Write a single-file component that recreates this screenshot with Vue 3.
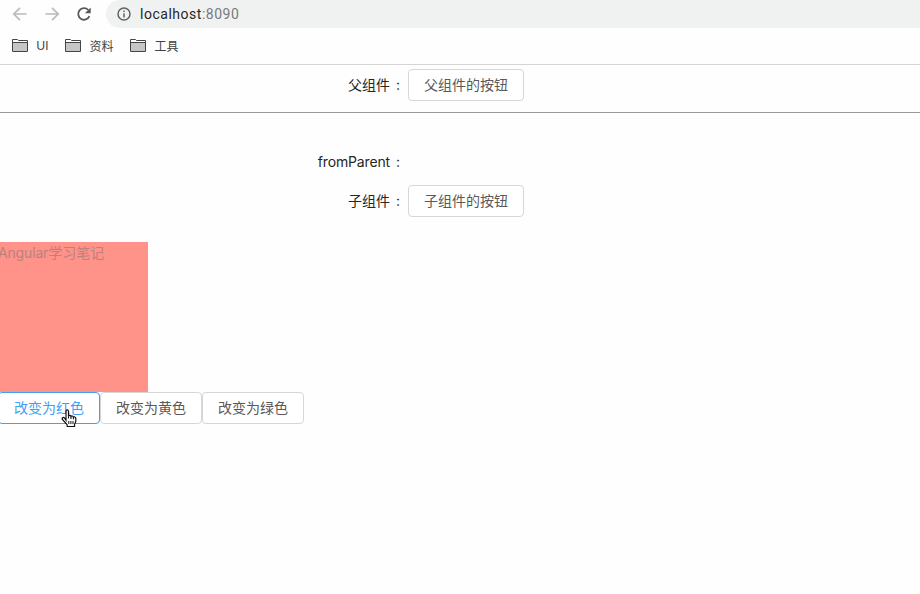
<template>
  <div class="window">
    <div class="toolbar">
      <svg class="nav" width="16" height="16" viewBox="0 0 16 16">
        <path d="M14.5 8H2M8 1.8L1.8 8L8 14.2" />
      </svg>
      <svg class="nav" width="16" height="16" viewBox="0 0 16 16">
        <path d="M1.5 8H14M8 1.8L14.2 8L8 14.2" />
      </svg>
      <svg class="reload" width="16" height="16" viewBox="0 0 16 16">
        <path class="arc" d="M13.4 10.2A5.8 5.8 0 1 1 12.2 3.9" />
        <path class="head" d="M14.7 1.4V7.2H8.9Z" />
      </svg>
      <div class="address">
        <svg width="14" height="14" viewBox="0 0 14 14">
          <circle cx="7" cy="7" r="6" />
          <path d="M7 6.2V10.4M7 3.6V5.1" />
        </svg>
        <span class="host">localhost</span><span class="port">:8090</span>
      </div>
    </div>

    <div class="bookmarks">
      <div v-for="item in bookmarks" :key="item" class="bookmark">
        <svg width="16" height="13" viewBox="0 0 16 13">
          <path class="back" d="M0.5 12.5V0.5H5.5L6.5 1.5H15.5V12.5Z" />
          <path class="front" d="M1 4H15V12H1Z" />
          <path class="line" d="M0.5 3.5H15.5" />
        </svg>
        <span>{{ item }}</span>
      </div>
    </div>

    <div class="page">
      <div class="form-item parent">
        <label>父组件<i>:</i></label>
        <button class="btn">父组件的按钮</button>
      </div>
      <hr />
      <div class="form-item from-parent">
        <label><span class="latin">fromParent</span><i>:</i></label>
      </div>
      <div class="form-item child">
        <label>子组件<i>:</i></label>
        <button class="btn">子组件的按钮</button>
      </div>

      <div class="box" :style="{ backgroundColor: color }">
        <span class="latin">Angular</span>学习笔记
      </div>
      <div class="actions">
        <button
          v-for="(item, index) in actions"
          :key="item.text"
          class="btn"
          :class="{ active: index === 0 }"
          @click="color = item.color"
        >
          {{ item.text }}
        </button>
        <!-- 手型光标 -->
        <svg class="cursor" width="16" height="19" viewBox="0 0 16 19">
          <path
            d="M5 11.2V2.3C5 .5 7.4 .5 7.5 2.3V7C8 6 9.8 6.2 10 7.4C10.6 6.6 12.2 6.9 12.4 8.2C13.2 7.5 14.8 8 14.8 9.4V12C14.8 13.6 13.7 14.4 13.5 15.5V17.5H6.2V16C5.4 14.5 3.4 12.9 1.6 10.6C.4 9 2.2 7.7 3.5 9Z"
          />
          <path class="fingers" d="M7.5 6.5V9.5M10 7.4V10M12.4 8.2V10.4M7.8 12V15M9.9 12V15M12 12V15" />
        </svg>
      </div>
    </div>
  </div>
</template>

<script setup>
import { ref } from 'vue'

const bookmarks = ['UI', '资料', '工具']
const actions = [
  { text: '改变为红色', color: '#ff938a' },
  { text: '改变为黄色', color: '#ffff8a' },
  { text: '改变为绿色', color: '#8ac58a' }
]
const color = ref('#ff938a')
</script>

<style>
body {
  background: #fefefe;
  overflow: hidden;
}
</style>

<style scoped>
.window {
  height: 594px;
  overflow: hidden;
  font-family: Inter, 'Noto Sans CJK SC', sans-serif;
  font-size: 14px;
  color: #262626;
}

svg {
  display: block;
  flex: none;
  fill: none;
}

.toolbar {
  display: flex;
  align-items: center;
  gap: 16px;
  height: 28px;
  padding-left: 12px;
}

.nav {
  stroke: #bababa;
  stroke-width: 1.7;
}

.arc {
  stroke: #55585c;
  stroke-width: 1.8;
}

.head {
  fill: #55585c;
}

.address {
  flex: 1;
  display: flex;
  align-items: center;
  height: 28px;
  margin-left: -2px;
  padding-left: 11px;
  border-radius: 14px 0 0 14px;
  background: #f0f2f1;
  font-family: Roboto, sans-serif;
  letter-spacing: 0.52px;
}

.address svg {
  margin-right: 9px;
  stroke: #5f6368;
  stroke-width: 1.5;
}

.port {
  color: #777a7d;
}

.bookmarks {
  box-sizing: border-box;
  display: flex;
  align-items: center;
  gap: 16.7px;
  height: 37px;
  padding: 0 0 1px 12px;
  border-bottom: 1px solid #d5d5d5;
  font-size: 12px;
  color: #404244;
}

.bookmark {
  display: flex;
  align-items: center;
  gap: 8.3px;
}

.bookmark .back {
  fill: #fff;
  stroke: #454545;
}

.bookmark .front {
  fill: #c6c6c6;
}

.bookmark .line {
  stroke: #454545;
}

.form-item {
  display: flex;
  align-items: center;
  height: 32px;
}

.form-item label {
  width: 400px;
  margin-right: 8px;
  padding-bottom: 2px;
  text-align: right;
}

.form-item i {
  margin-left: 6px;
  font-style: normal;
}

.latin {
  letter-spacing: -0.16px;
}

.parent {
  margin-top: 4px;
}

.from-parent {
  margin-top: 33px;
}

.child {
  margin-top: 7px;
}

hr {
  height: 1px;
  margin: 11px 0 0;
  border: none;
  background: #999;
}

.btn {
  box-sizing: border-box;
  height: 32px;
  padding: 0 15px 2px;
  border: 1px solid #d6d6d6;
  border-radius: 4px;
  background: #fff;
  color: #595959;
  font-family: inherit;
  font-size: 14px;
  white-space: nowrap;
  cursor: pointer;
}

.btn.active {
  border-color: #40a0f5;
  color: #40a0f5;
}

.box {
  width: 150px;
  height: 150px;
  margin: 25px 0 0 -2px;
  line-height: 22px;
  color: #b9827d;
}

.actions {
  position: relative;
  display: flex;
  margin-left: -2px;
}

.cursor {
  position: absolute;
  left: 63px;
  top: 17px;
  fill: #fff;
  stroke: #111;
  stroke-width: 1.2;
  pointer-events: none;
}

.cursor .fingers {
  stroke-width: 1;
}
</style>
